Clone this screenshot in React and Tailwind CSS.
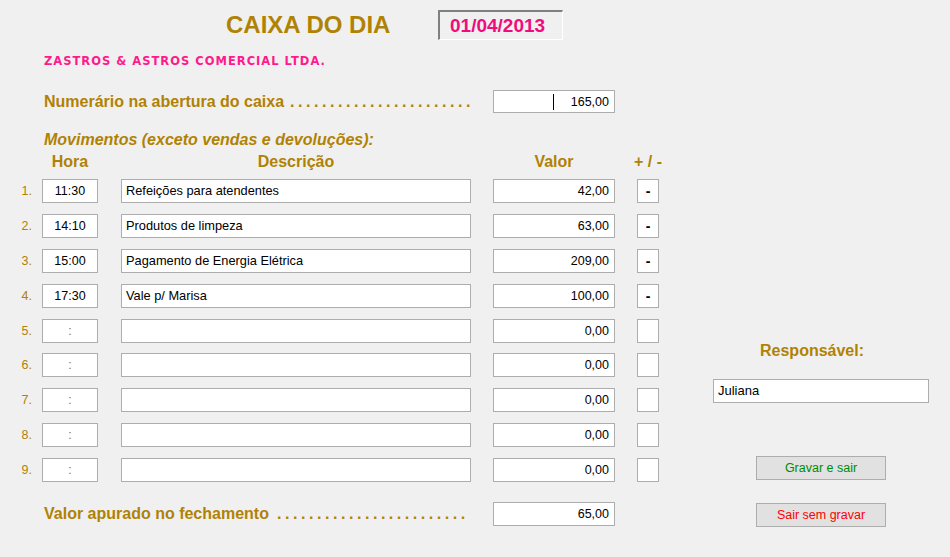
import React from "react";

// ─── Data ─────────────────────────────────────────────────────────────────────
const MOVIMENTOS = [
  { hora: "11:30", desc: "Refeições para atendentes", valor: "42,00", sinal: "-" },
  { hora: "14:10", desc: "Produtos de limpeza", valor: "63,00", sinal: "-" },
  { hora: "15:00", desc: "Pagamento de Energia Elétrica", valor: "209,00", sinal: "-" },
  { hora: "17:30", desc: "Vale p/ Marisa", valor: "100,00", sinal: "-" },
  { hora: "", desc: "", valor: "0,00", sinal: "" },
  { hora: "", desc: "", valor: "0,00", sinal: "" },
  { hora: "", desc: "", valor: "0,00", sinal: "" },
  { hora: "", desc: "", valor: "0,00", sinal: "" },
  { hora: "", desc: "", valor: "0,00", sinal: "" },
];

const field = "bg-white border border-[#adadad] h-[24px] flex items-center";

// ─── Dotted leader ────────────────────────────────────────────────────────────
function Dots({ count, className = "" }) {
  return (
    <span className={`tracking-[3.55px] whitespace-nowrap ${className}`}>
      {".".repeat(count)}
    </span>
  );
}

// ─── One movement row ─────────────────────────────────────────────────────────
function Row({ n, item }) {
  const empty = !item.hora;
  return (
    <div className="flex items-center h-[24px] text-[12.5px] font-normal text-black">
      <div className="w-[42px] text-right pr-[10px] text-[#b08204]">{n}.</div>
      <div className={`${field} w-[56px] justify-center`}>
        {empty ? <span className="text-[#a86a20]">:</span> : item.hora}
      </div>
      <div className={`${field} ml-[23px] w-[350px] pl-[4px] text-[12.8px]`}>
        {item.desc}
      </div>
      <div className={`${field} ml-[22px] w-[122px] justify-end pr-[5px]`}>
        {item.valor}
      </div>
      <div className={`${field} ml-[22px] w-[22px] justify-center font-bold text-[14px]`}>
        {item.sinal}
      </div>
    </div>
  );
}

export default function App() {
  return (
    <div className="w-[950px] h-[557px] bg-[#f0f0f0] flex overflow-hidden font-['Liberation_Sans',Arial,sans-serif] text-[#b08204] font-bold text-[16px] leading-[18px]">
      {/* ── Left column ── */}
      <div className="w-[670px] flex flex-col pt-[10px]">
        {/* Header */}
        <div className="flex items-center h-[30px]">
          <div className="w-[438px] pl-[226px] text-[24px] leading-[28px]">
            CAIXA DO DIA
          </div>
          <div className="w-[125px] h-[30px] flex items-center pl-[10px] border-t-2 border-l-2 border-r border-b border-t-[#808080] border-l-[#808080] border-r-white border-b-white text-[19px] leading-[22px] text-[#f00c7c]">
            01/04/2013
          </div>
        </div>

        <div className="mt-[14px] pl-[44px] text-[11.5px] leading-[14px] tracking-[1px] text-[#ff1a8c] font-['DejaVu_Sans',sans-serif]">
          ZASTROS &amp; ASTROS COMERCIAL LTDA.
        </div>

        {/* Opening balance */}
        <div className="mt-[22px] flex items-center h-[23px]">
          <div className="w-[493px] pl-[44px] flex items-center">
            <span>Numerário na abertura do caixa</span>
            <Dots count={23} className="ml-[6px]" />
          </div>
          <div className="bg-white border border-[#adadad] w-[122px] h-[23px] flex items-center justify-end pr-[5px] text-[12.5px] font-normal text-black">
            <span className="w-[1px] h-[16px] bg-black mr-[17px]" />
            165,00
          </div>
        </div>

        <div className="mt-[18px] pl-[44px] italic">
          Movimentos (exceto vendas e devoluções):
        </div>

        {/* Column headers */}
        <div className="mt-[4px] flex h-[18px]">
          <div className="w-[42px]" />
          <div className="w-[56px] text-center">Hora</div>
          <div className="ml-[23px] w-[350px] text-center">Descrição</div>
          <div className="ml-[22px] w-[122px] text-center">Valor</div>
          <div className="ml-[22px] w-[22px] flex justify-center whitespace-nowrap">
            + / -
          </div>
        </div>

        {/* Rows */}
        <div className="mt-[8px] flex flex-col gap-[10.875px]">
          {MOVIMENTOS.map((item, i) => (
            <Row key={i} n={i + 1} item={item} />
          ))}
        </div>

        {/* Closing balance */}
        <div className="mt-[20px] flex items-center h-[24px]">
          <div className="w-[493px] pl-[44px] flex items-center">
            <span>Valor apurado no fechamento</span>
            <Dots count={24} className="ml-[8px]" />
          </div>
          <div className={`${field} w-[122px] justify-end pr-[5px] text-[12.5px] font-normal text-black`}>
            65,00
          </div>
        </div>
      </div>

      {/* ── Right column ── */}
      <div className="w-[280px] flex flex-col pt-[342px]">
        <div className="ml-[90px]">Responsável:</div>
        <div className={`${field} mt-[19px] ml-[43px] w-[216px] pl-[4px] text-[13px] font-normal text-black`}>
          Juliana
        </div>
        <button className="mt-[53px] ml-[86px] w-[130px] h-[24px] bg-[#e1e1e1] border border-[#adadad] text-[12.5px] font-normal text-[#008a00]">
          Gravar e sair
        </button>
        <button className="mt-[23px] ml-[86px] w-[130px] h-[24px] bg-[#e1e1e1] border border-[#adadad] text-[12.5px] font-normal text-[#ff0000]">
          Sair sem gravar
        </button>
      </div>
    </div>
  );
}
